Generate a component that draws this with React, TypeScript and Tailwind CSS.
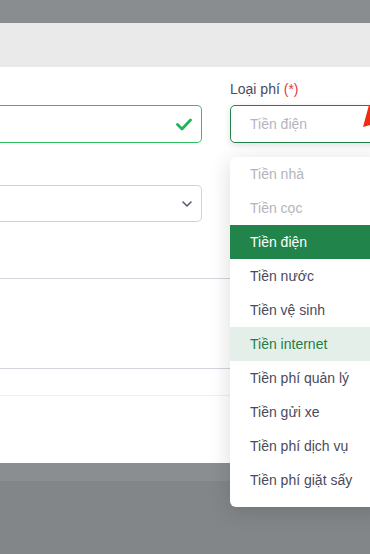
import React from 'react';

const options = [
  { label: 'Tiền nhà', state: 'disabled' },
  { label: 'Tiền cọc', state: 'disabled' },
  { label: 'Tiền điện', state: 'selected' },
  { label: 'Tiền nước', state: 'normal' },
  { label: 'Tiền vệ sinh', state: 'normal' },
  { label: 'Tiền internet', state: 'hover' },
  { label: 'Tiền phí quản lý', state: 'normal' },
  { label: 'Tiền gửi xe', state: 'normal' },
  { label: 'Tiền phí dịch vụ', state: 'normal' },
  { label: 'Tiền phí giặt sấy', state: 'normal' },
];

const itemClass: Record<string, string> = {
  disabled: 'text-[#b4b4bc]',
  selected: 'bg-[#21844a] text-white',
  normal: 'text-[#4a4a5c]',
  hover: 'bg-[#e5efe9] text-[#1f7e46]',
};

const App: React.FC = () => {
  return (
    <div className="relative w-[370px] h-[554px] overflow-hidden bg-[#838688] flex flex-col font-['Liberation_Sans',Arial,sans-serif] text-[14px]">
      <div className="h-[23px] bg-[#8a8d90]" />

      {/* modal */}
      <div className="flex flex-col">
        <div className="h-[44px] bg-[#eaeaea]" />
        <div className="h-[396px] bg-white flex flex-col">
          <div className="flex gap-[28px] pt-[12px]">
            <div className="w-[202px] shrink-0 flex flex-col">
              <div className="h-[20px]" />
              <div className="mt-[6px] h-[38px] border border-l-0 border-[#2fc262] rounded-r-[5px] flex items-center justify-end pr-[9px]">
                <svg width="16" height="13" viewBox="0 0 16 13">
                  <path d="M1.5 6.5 L6 11 L14.5 2" fill="none" stroke="#22b45a" strokeWidth="2.8" strokeLinecap="round" strokeLinejoin="round" />
                </svg>
              </div>
            </div>
            <div className="flex-1 flex flex-col">
              <div className="h-[20px] leading-[20px] text-[#4b4b5e]">
                Loại phí <span className="text-[#e5393a]">(*)</span>
              </div>
              <div className="mt-[6px] h-[38px] w-[160px] border border-[#21844a] rounded-[5px] flex items-center pl-[19px] text-[#b5b5bd] shadow-[0_2px_6px_rgba(0,0,0,0.12)]">
                Tiền điện
              </div>
            </div>
          </div>

          <div className="mt-[42px] w-[202px] h-[37px] border border-[#d2d2d8] border-l-0 rounded-r-[5px] flex items-center justify-end pr-[9px]">
            <svg width="10" height="6" viewBox="0 0 10 6">
              <path d="M1 1 L5 5 L9 1" fill="none" stroke="#5b5b6b" strokeWidth="1.6" strokeLinecap="round" strokeLinejoin="round" />
            </svg>
          </div>

          <div className="mt-[56px] border-t border-[#d4d3dc]" />
          <div className="mt-[89px] border-t border-[#d4d3dc]" />
          <div className="mt-[26px] border-t border-[#efeff1]" />
        </div>
      </div>

      <div className="h-[18px] bg-[#8b8e90]" />

      {/* dropdown */}
      <div className="absolute left-[230px] top-[157px] w-[160px] bg-white rounded-[6px] pb-[10px] shadow-[0_4px_22px_rgba(0,0,0,0.14)]">
        {options.map((o) => (
          <div key={o.label} className={`h-[34px] flex items-center pl-[20px] whitespace-nowrap ${itemClass[o.state]}`}>
            {o.label}
          </div>
        ))}
      </div>

      {/* red annotation arrow */}
      <svg className="absolute left-[360px] top-[103px]" width="10" height="26" viewBox="0 0 10 26">
        <polygon points="3,24 9,2 10,2 10,22" fill="#f22a12" />
      </svg>
    </div>
  );
};

export default App;
